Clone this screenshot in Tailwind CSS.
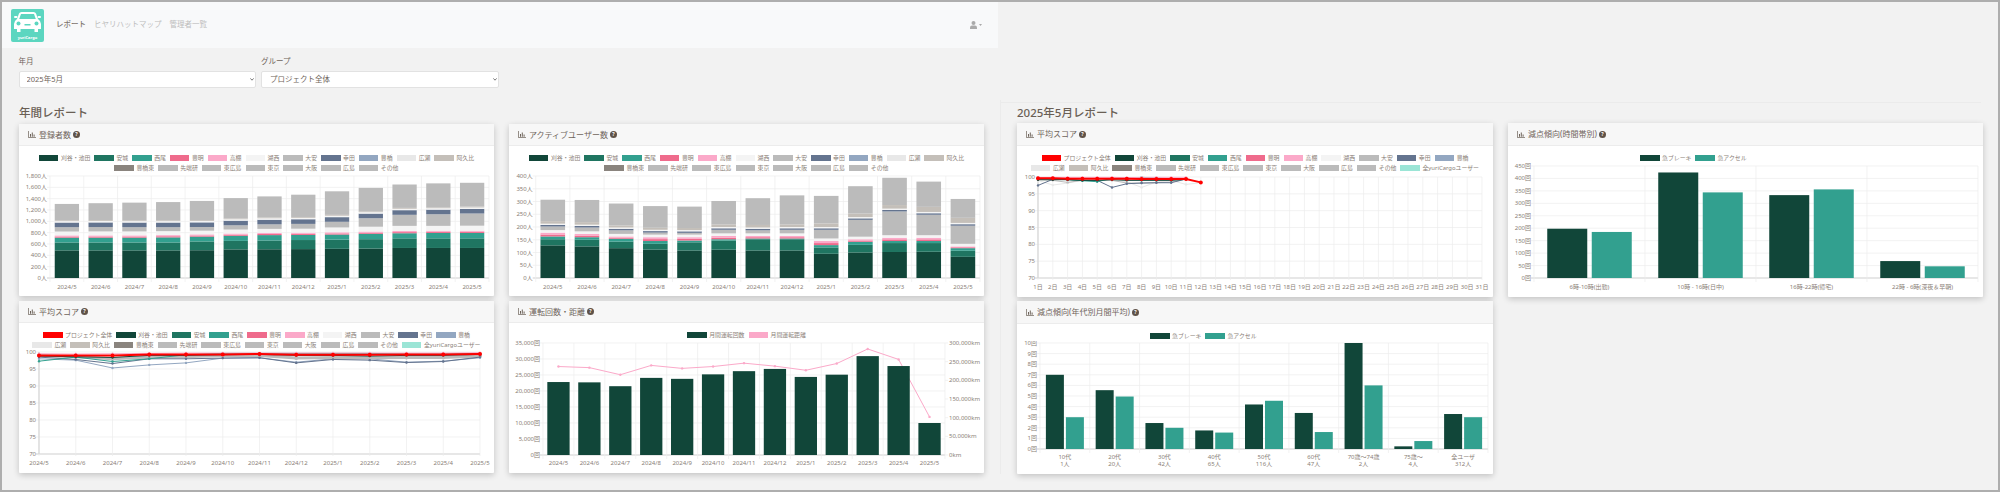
<!DOCTYPE html>
<html lang="ja">
<head>
  <meta charset="UTF-8"/>
  <title>レポート</title>
  <script src="https://cdn.jsdelivr.net/npm/@tailwindcss/browser@4"></script>
</head>
<body class="bg-[#f2f2f2] font-['Noto_Sans','Noto_Sans_CJK_JP',sans-serif] text-[#6f645b]">
<div class="w-[2000px] h-[492px] border-2 border-[#aeaeae] bg-[#f2f2f2] overflow-hidden">

  <!-- Navbar -->
  <nav class="w-[996px] h-[46px] bg-[#f8f9fa] flex items-center pl-[9px] pr-[16px]">
    <svg class="w-[33px] h-[33px] shrink-0" viewBox="0 0 33 33">
      <rect width="33" height="33" rx="2" fill="#5cd6c0"/>
      <path d="M8 4.5Q8.6 3 10.5 3H22.5Q24.4 3 25 4.5L27 10Q30 12 30 15V20H27V23H23.5V20H9.5V23H6V20H3V15Q3 12 6 10Z" fill="#fff"/>
      <rect x="3" y="7" width="3.5" height="2" rx="1" fill="#fff"/>
      <rect x="26.5" y="7" width="3.5" height="2" rx="1" fill="#fff"/>
      <path d="M10 5H23L24.8 10H8.2Z" fill="#5cd6c0"/>
      <circle cx="7.5" cy="14.5" r="2" fill="#5cd6c0"/>
      <circle cx="25.5" cy="14.5" r="2" fill="#5cd6c0"/>
      <rect x="13.5" y="15" width="6" height="1.5" fill="#5cd6c0"/>
      <text x="16.5" y="29.5" text-anchor="middle" font-size="4" font-weight="700" fill="#fff">yuriCargo</text>
    </svg>
    <div class="flex items-center gap-[8px] ml-[12px] text-[7.5px]">
      <a class="text-[#7d756d] font-medium">レポート</a>
      <a class="text-[#bdbdbd]">ヒヤリハットマップ</a>
      <a class="text-[#bdbdbd]">管理者一覧</a>
    </div>
    <div class="ml-auto flex items-center gap-[2px]">
      <svg class="w-[7px] h-[8px]" viewBox="0 0 7 8"><circle cx="3.5" cy="2" r="2" fill="#aaa"/><path d="M0 8v-1.500q0-2 2-2h3q2 0 2 2v1.500z" fill="#aaa"/></svg>
      <svg class="w-[3px] h-[2px]" viewBox="0 0 3 2"><path d="M0 0h3l-1.500 2z" fill="#aaa"/></svg>
    </div>
  </nav>

  <!-- Filters -->
  <div class="h-[52px] pt-[8px] pl-[16.5px] flex gap-[5px] text-[7.5px]">
    <div class="w-[237.5px]">
      <label class="block h-[15px] leading-[11px]">年月</label>
      <div class="relative">
        <select class="appearance-none w-full h-[17px] bg-white border border-[#e2e2e2] rounded-[2px] pl-[7px] text-[#6f645b]"><option>2025年5月</option></select>
        <svg class="absolute right-[2px] top-[7px] w-[4px] h-[3px]" viewBox="0 0 4 3"><path d="M.4.4l1.600 1.800 1.600-1.800" fill="none" stroke="#555" stroke-width=".8"/></svg>
      </div>
    </div>
    <div class="w-[238px]">
      <label class="block h-[15px] leading-[11px]">グループ</label>
      <div class="relative">
        <select class="appearance-none w-full h-[17px] bg-white border border-[#e2e2e2] rounded-[2px] pl-[8px] text-[#6f645b]"><option>プロジェクト全体</option></select>
        <svg class="absolute right-[2px] top-[7px] w-[4px] h-[3px]" viewBox="0 0 4 3"><path d="M.4.4l1.600 1.800 1.600-1.800" fill="none" stroke="#555" stroke-width=".8"/></svg>
      </div>
    </div>
  </div>

  <div class="flex">
    <!-- 年間レポート -->
    <section class="w-[998px] pl-[17px]">
      <h2 class="h-[24px] pt-[4px] leading-[18px] text-[11.5px] font-medium text-[#6a5f55]">年間レポート</h2>
      <div class="grid grid-cols-[475px_475px] gap-x-[15px] gap-y-[5px]">
        <article class="h-[172px] bg-white shadow-[0_2px_6px_rgba(0,0,0,0.2)] rounded-[1px]">
          <header class="card-head h-[22px]" data-title="登録者数"></header>
          <div class="legend h-[27px] pt-[7px]" data-rows="m1,m2"></div>
          <svg id="c1" class="block w-[475px] h-[123px]" viewBox="19 173 475 123"></svg>
        </article>
        <article class="h-[172px] bg-white shadow-[0_2px_6px_rgba(0,0,0,0.2)] rounded-[1px]">
          <header class="card-head h-[22px]" data-title="アクティブユーザー数"></header>
          <div class="legend h-[27px] pt-[7px]" data-rows="m1,m2"></div>
          <svg id="c2" class="block w-[475px] h-[123px]" viewBox="509 173 475 123"></svg>
        </article>
        <article class="h-[172px] bg-white shadow-[0_2px_6px_rgba(0,0,0,0.2)] rounded-[1px]">
          <header class="card-head h-[22px]" data-title="平均スコア"></header>
          <div class="legend h-[27px] pt-[7px]" data-rows="s1,s2"></div>
          <svg id="c3" class="block w-[475px] h-[123px]" viewBox="19 350 475 123"></svg>
        </article>
        <article class="h-[172px] bg-white shadow-[0_2px_6px_rgba(0,0,0,0.2)] rounded-[1px]">
          <header class="card-head h-[22px]" data-title="運転回数・距離"></header>
          <div class="legend h-[17px] pt-[7px]" data-rows="d"></div>
          <svg id="c4" class="block w-[475px] h-[133px]" viewBox="509 340 475 133"></svg>
        </article>
      </div>
    </section>

    <!-- 2025年5月レポート -->
    <section class="w-[982px] relative pl-[16px] border-l border-[#ebebeb]">
      <div class="absolute left-0 top-[2px] w-[980px] border-t border-[#ebebeb]"></div>
      <h2 class="h-[23px] pt-[4px] leading-[18px] text-[11.5px] font-medium text-[#6a5f55]">2025年5月レポート</h2>
      <div class="grid grid-cols-[476px_475px] gap-x-[15px] gap-y-[4px]">
        <article class="h-[174px] bg-white shadow-[0_2px_6px_rgba(0,0,0,0.2)] rounded-[1px]">
          <header class="card-head h-[23px]" data-title="平均スコア"></header>
          <div class="legend h-[27px] pt-[7px]" data-rows="s1,s2"></div>
          <svg id="c5" class="block w-[476px] h-[124px]" viewBox="1016 173 476 124"></svg>
        </article>
        <article class="h-[174px] bg-white shadow-[0_2px_6px_rgba(0,0,0,0.2)] rounded-[1px]">
          <header class="card-head h-[23px]" data-title="減点傾向(時間帯別)"></header>
          <div class="legend h-[17px] pt-[7px] pl-[130px] [&>div]:justify-start" data-rows="b"></div>
          <svg id="c6" class="block w-[475px] h-[134px]" viewBox="1507 163 475 134"></svg>
        </article>
        <article class="h-[173px] bg-white shadow-[0_2px_6px_rgba(0,0,0,0.2)] rounded-[1px]">
          <header class="card-head h-[23px]" data-title="減点傾向(年代別月間平均)"></header>
          <div class="legend h-[17px] pt-[7px] pl-[131px] [&>div]:justify-start" data-rows="b"></div>
          <svg id="c7" class="block w-[476px] h-[133px]" viewBox="1016 341 476 133"></svg>
        </article>
      </div>
    </section>
  </div>
</div>

<script>
  const DARK = "#114639", GREEN = "#1f7561", TEAL = "#32a08f", PINK = "#ef6b8c", LPINK = "#fba9c9",
        WHITE = "#f4f4f4", GRAY = "#bbbbbb", SLATE = "#64748f", BLUE = "#93a7c1", PALE = "#e8e8e8",
        BEIGE = "#c4bfb9", TAUPE = "#8a847e", RED = "#ff0000", MINT = "#9be5d6";
  const TICK = "#8a8077", LINE = "#ececec", AXIS = "#cfcfcf";

  const legends = {
    m1: [["刈谷・池田",DARK],["安城",GREEN],["西尾",TEAL],["豊明",PINK],["高棚",LPINK],["湖西",WHITE],["大安",GRAY],["幸田",SLATE],["豊橋",BLUE],["広瀬",PALE],["阿久比",BEIGE]],
    m2: [["豊橋東",TAUPE],["先端研",GRAY],["東広島",GRAY],["東京",GRAY],["大阪",GRAY],["広島",GRAY],["その他",GRAY]],
    s1: [["プロジェクト全体",RED],["刈谷・池田",DARK],["安城",GREEN],["西尾",TEAL],["豊明",PINK],["高棚",LPINK],["湖西",WHITE],["大安",GRAY],["幸田",SLATE],["豊橋",BLUE]],
    s2: [["広瀬",PALE],["阿久比",BEIGE],["豊橋東",TAUPE],["先端研",GRAY],["東広島",GRAY],["東京",GRAY],["大阪",GRAY],["広島",GRAY],["その他",GRAY],["全yuriCargoユーザー",MINT]],
    d: [["月間運転回数",DARK],["月間運転距離",LPINK]],
    b: [["急ブレーキ",DARK],["急アクセル",TEAL]]
  };

  // card headers
  document.querySelectorAll(".card-head").forEach(h => {
    h.className += " flex items-center gap-[2px] pl-[9px] bg-[#f7f7f7] border-b border-[#ececec] text-[8px] text-[#6f645b]";
    h.innerHTML = `<svg class="w-[8px] h-[7px] mr-[1px]" viewBox="0 0 8 7"><path d="M.4 0v6.600h7.600" fill="none" stroke="#6f645b" stroke-width=".8"/><path d="M2 3h1v2.800h-1zM3.800 1.500h1v4.300h-1zM5.600 3.500h1v2.300h-1z" fill="#6f645b"/></svg>
      <span>${h.dataset.title}</span>
      <svg class="w-[7px] h-[7px]" viewBox="0 0 7 7"><circle cx="3.5" cy="3.5" r="3.5" fill="#5f5248"/><text x="3.5" y="5.4" text-anchor="middle" font-size="5" font-weight="700" fill="#fff">?</text></svg>`;
  });

  // legends
  document.querySelectorAll(".legend").forEach(box => {
    box.innerHTML = box.dataset.rows.split(",").map(r =>
      `<div class="flex justify-center h-[10px] items-center text-[5.9px] leading-[10px] text-[#8a8077]">` +
      legends[r].map(([name, color]) =>
        `<span class="flex items-center mx-[2px]"><i class="block w-[19.5px] h-[6px] mr-[2.5px]" style="background:${color}"></i>${name}</span>`
      ).join("") + `</div>`
    ).join("");
  });

  const months = ["2024/5","2024/6","2024/7","2024/8","2024/9","2024/10","2024/11","2024/12","2025/1","2025/2","2025/3","2025/4","2025/5"];
  const txt = (x, y, s, a = "middle") => `<text x="${x}" y="${y}" font-size="6" fill="${TICK}" text-anchor="${a}">${s}</text>`;
  const ln = (x1, y1, x2, y2, c = LINE, w = 0.7) => `<line x1="${x1}" y1="${y1}" x2="${x2}" y2="${y2}" stroke="${c}" stroke-width="${w}"/>`;
  const rect = (x, y, w, h, c) => `<rect x="${x}" y="${y}" width="${w}" height="${h}" fill="${c}"/>`;

  // draws grid, y labels and x labels. points=true puts the x labels on the grid lines
  function frame(o) {
    const n = o.x.length, div = o.points ? n - 1 : n, step = (o.r - o.l) / div;
    let s = "";
    o.y.forEach((label, i) => {
      const y = o.b - (o.b - o.t) * i / (o.y.length - 1);
      s += ln(o.l - 3, y, o.r, y, i ? LINE : AXIS, i ? 0.7 : 1);
      s += txt(o.l - 3, y + 2, label, "end");
    });
    for (let i = 0; i <= div; i++) s += ln(o.l + step * i, o.t, o.l + step * i, o.b + (o.points ? 2 : 4));
    if (o.points) s += ln(o.l, o.t, o.l, o.b, AXIS, 1);
    o.x.forEach((label, i) => {
      const cx = o.points ? o.l + step * i : o.l + step * (i + 0.5);
      [].concat(label).forEach((t, k) => { s += txt(cx, o.b + (o.xGap || 11) + k * 7, t); });
    });
    return s;
  }

  function stacked(id, o, series, max, barW) {
    const step = (o.r - o.l) / o.x.length, h = o.b - o.t;
    let s = frame(o);
    o.x.forEach((_, i) => {
      let sum = 0;
      series.forEach(([vals, c]) => {
        const top = o.b - (sum + vals[i]) / max * h;
        s += rect(o.l + step * (i + 0.5) - barW / 2, top, barW, vals[i] / max * h, c);
        sum += vals[i];
      });
    });
    document.getElementById(id).innerHTML = s;
  }

  function polyline(pts, c, w) {
    let s = `<polyline points="${pts.map(p => p.join(",")).join(" ")}" fill="none" stroke="${c}" stroke-width="${w}"/>`;
    pts.forEach(p => { s += `<circle cx="${p[0]}" cy="${p[1]}" r="${w > 1.5 ? 2 : 1.2}" fill="${c}"/>`; });
    return s;
  }

  function lines(id, o, series) {
    const step = (o.r - o.l) / (o.x.length - 1);
    const Y = v => o.b - (v - 70) / 30 * (o.b - o.t);
    let s = frame(o);
    series.forEach(([vals, c, w]) => { s += polyline(vals.map((v, i) => [o.l + step * i, Y(v)]), c, w); });
    document.getElementById(id).innerHTML = s;
  }

  function grouped(id, o, a, b, max, barW, gap) {
    const step = (o.r - o.l) / o.x.length, h = o.b - o.t;
    let s = frame(o);
    o.x.forEach((_, i) => {
      const cx = o.l + step * (i + 0.5);
      s += rect(cx - gap / 2 - barW, o.b - a[i] / max * h, barW, a[i] / max * h, DARK);
      s += rect(cx + gap / 2, o.b - b[i] / max * h, barW, b[i] / max * h, TEAL);
    });
    document.getElementById(id).innerHTML = s;
  }

  // 登録者数
  const f = (arr, v) => arr.map(() => v);
  (function () {
    const dark = [487,487,487,487,490,505,507,510,515,520,530,530,530];
    const sec = [140,140,140,140,155,150,155,160,162,165,170,170,170];
    const third = [85,85,85,90,85,90,95,90,90,95,90,95,95];
    const lake = [68,70,70,70,65,70,70,70,85,85,90,85,88];
    const oan = [77,77,75,70,65,75,80,85,100,150,195,205,215];
    const total = [1307,1320,1330,1340,1360,1410,1440,1470,1530,1590,1650,1670,1680];
    const rest = total.map((t, i) => t - dark[i] - sec[i] - third[i] - 40 - lake[i] - oan[i] - 82 - 25 - 15);
    const series = [[dark,DARK],[sec,GREEN],[third,TEAL],[f(dark,20),PINK],[f(dark,20),LPINK],[lake,WHITE],[oan,GRAY],[f(dark,82),SLATE],[f(dark,25),WHITE],[f(dark,15),BEIGE],[rest,GRAY]];
    stacked("c1", {l:50,r:489,t:176,b:278,x:months,xGap:11,y:["0人","200人","400人","600人","800人","1,000人","1,200人","1,400人","1,600人","1,800人"]}, series, 1800, 24.3);
  })();

  // アクティブユーザー数
  (function () {
    const dark = [128,124,117,111,108,111,108,108,95,100,102,103,83];
    const sec = [24,26,26,23,32,36,44,44,25,30,35,34,24];
    const third = [11,10,11,11,7,5,3,3,9,12,8,8,10];
    const pink = [15,13,9,15,13,13,10,10,16,10,13,13,7];
    const slate = [208,204,193,184,183,195,193,195,195,234,267,254,211];
    const total = [307,306,292,282,280,302,313,324,322,360,393,378,310];
    const sumLow = dark.map((v, i) => v + sec[i] + third[i] + pink[i]);
    const oan = slate.map((v, i) => v - 6 - sumLow[i] - 10);
    const beige = [10,10,8,8,8,10,10,10,14,14,14,20,20];
    const rest = total.map((t, i) => t - slate[i] - 5 - beige[i]);
    const series = [[dark,DARK],[sec,GREEN],[third,TEAL],[pink.map(v => v / 2),PINK],[pink.map(v => v / 2),LPINK],[f(dark,10),WHITE],[oan,GRAY],[f(dark,6),SLATE],[f(dark,5),WHITE],[beige,BEIGE],[rest,GRAY]];
    stacked("c2", {l:535.7,r:980,t:176,b:278,x:months,xGap:11,y:["0人","50人","100人","150人","200人","250人","300人","350人","400人"]}, series, 400, 24.6);
  })();

  // 平均スコア(年間)
  const scoreY = ["70","75","80","85","90","95","100"];
  lines("c3", {l:39,r:480,t:352,b:454,x:months,points:true,xGap:11,y:scoreY}, [
    [[98,97.6,95.3,96.2,96.8,98.2,98.3,97,98,98,97,97.3,98.3],BLUE,1],
    [[99,98.6,98,98.5,98.6,99,99,98.2,98.4,98.3,98.4,98.4,98.8],GRAY,3],
    [[98.5,97.8,96.6,98,98,98.2,98.3,96.8,97.8,97.6,96.9,97.2,98.5],SLATE,1],
    [[97.3,98.5,97.2,98,99.2,99.6,99.6,99.6,99.6,99.6,99.4,99.4,99.6],TEAL,1],
    [[98.8,98.6,98.4,99,99,99.2,99.3,99,99,98.8,99,99,99.3],DARK,1],
    [[99.5,99.4,99.5,99.6,99.7,99.7,99.7,99.7,99.7,99.7,99.7,99.7,99.8],LPINK,1],
    [[99,99,99,99.3,99.3,99.3,99.4,99.2,99.2,99.2,99.3,99.3,99.4],RED,2]
  ]);

  // 運転回数・距離 (line sits behind the bars)
  (function () {
    const o = {l:543,r:945,t:343,b:455,x:months,xGap:10,y:["0回","5,000回","10,000回","15,000回","20,000回","25,000回","30,000回","35,000回"]};
    const step = (o.r - o.l) / o.x.length, h = o.b - o.t;
    const count = [22800,22700,21500,24100,23800,25200,26200,26900,24400,25100,30900,27800,10000];
    const km = [237,234,215,240,232,237,246,238,227,245,284,256,102];
    let s = frame(o);
    ["0km","50,000km","100,000km","150,000km","200,000km","250,000km","300,000km"].forEach((t, i) => {
      const y = o.b - h * i / 6;
      s += ln(o.r, y, o.r + 3, y) + txt(o.r + 4, y + 2, t, "start");
    });
    s += polyline(km.map((v, i) => [o.l + step * (i + 0.5), o.b - v / 300 * h]), LPINK, 1);
    count.forEach((v, i) => { s += rect(o.l + step * (i + 0.5) - 11.15, o.b - v / 35000 * h, 22.3, v / 35000 * h, DARK); });
    document.getElementById("c4").innerHTML = s;
  })();

  // 平均スコア(日別)
  const days = Array.from({length: 31}, (_, i) => `${i + 1}日`);
  (function () {
    const o = {l:1037,r:1481,t:177,b:278,x:days,points:true,xGap:11,y:scoreY};
    lines("c5", o, [
      [[99,97.6,98.2,99,99,99,98.6,96.9,98.5,99,97.8,98.3],PALE,1],
      [[99.2,99,98.4,99,99,99,98.2,98.2,98.3,98.5,99.4],GRAY,1],
      [[97.5,99.3,99.3,99,99,96.9,98,98.2,98.3,98.3,99.4],SLATE,1],
      [[99.5,99.5,99.2,98.9,98.6,99.6,99.4,99.9,99.7,99.5,99.5],TEAL,1],
      [[99.2,99.2,99.2,99,99,99.2,99,99,99,99,99.3],DARK,1],
      [[99.9,99.9,99.9,99.9,99.9,99.9,99.8,99.9,99.9,99.9,99.9],LPINK,1],
      [[99.6,99.6,99.5,99.5,99.5,99.5,99.5,99.4,99.4,99.4,99.4,98.4],RED,2]
    ]);
  })();

  // 減点傾向(時間帯別)
  grouped("c6", {l:1533,r:1977,t:166,b:278,xGap:11,x:["6時-10時(出勤)","10時 - 16時(日中)","16時-22時(帰宅)","22時 - 6時(深夜＆早朝)"],
    y:["0回","50回","100回","150回","200回","250回","300回","350回","400回","450回"]},
    [198,424,333,68],[185,344,356,47],450,40,4.5);

  // 減点傾向(年代別月間平均)
  grouped("c7", {l:1039,r:1487,t:343,b:449,xGap:10,
    x:[["10代","1人"],["20代","20人"],["30代","42人"],["40代","65人"],["50代","116人"],["60代","47人"],["70歳〜74歳","2人"],["75歳〜","4人"],["全ユーザ","312人"]],
    y:["0回","1回","2回","3回","4回","5回","6回","7回","8回","9回","10回"]},
    [7,5.55,2.45,1.75,4.2,3.4,10,0.25,3.3],[3,4.95,2,1.55,4.55,1.6,6,0.75,3],10,18,2);
</script>
</body>
</html>
